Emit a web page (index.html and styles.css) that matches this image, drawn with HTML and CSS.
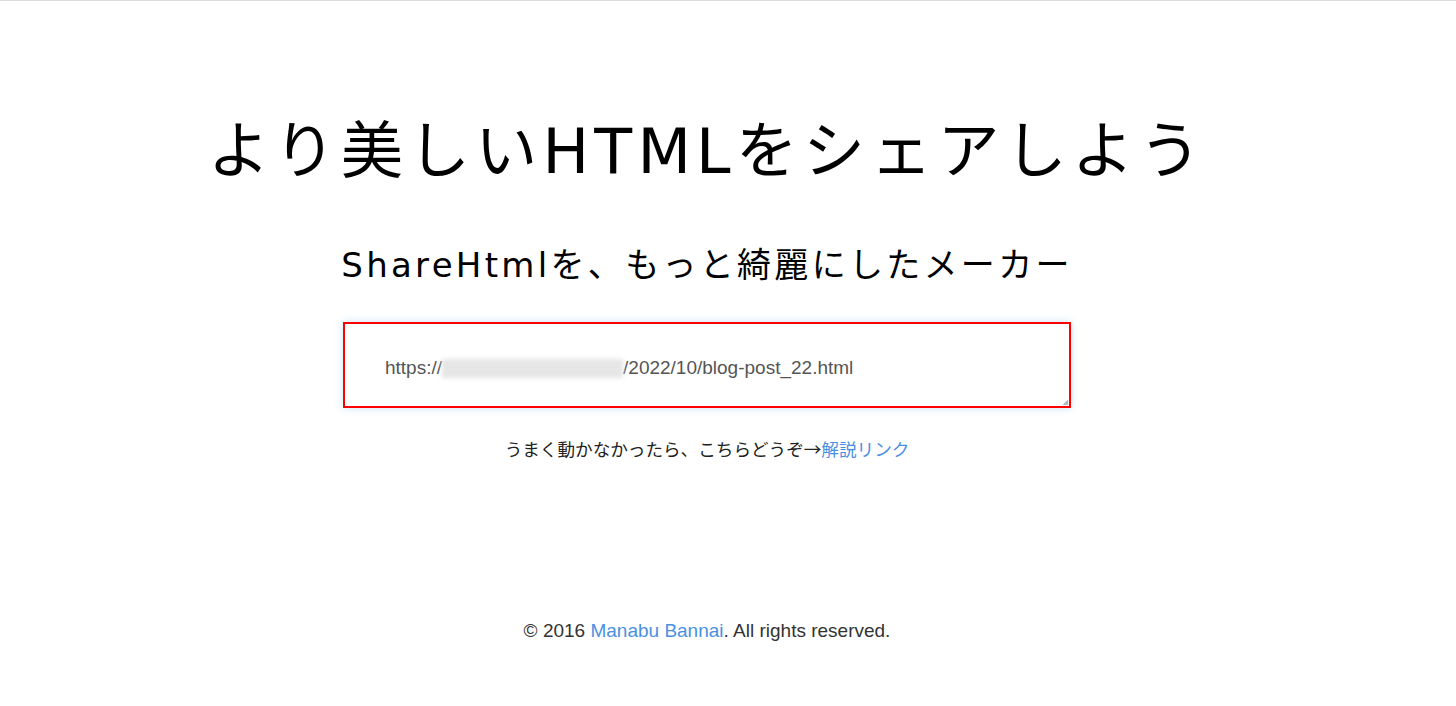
FILE: index.html
```html
<!DOCTYPE html>
<html lang="ja">
<head>
    <meta charset="UTF-8">
    <meta name="viewport" content="width=device-width, initial-scale=1.0">
    <title>ShareHtml Maker</title>
    <link rel="stylesheet" href="styles.css">
</head>
<body>

<div class="wrapper">
    <h1>より美しいHTMLをシェアしよう</h1>
    <h2>ShareHtmlを、もっと綺麗にしたメーカー</h2>

    <div class="url-box">
        <span>https://</span><span class="blur"></span><span>/2022/10/blog-post_22.html</span>
        <span class="grip"></span>
    </div>

    <p class="hint">うまく動かなかったら、こちらどうぞ→<a href="#">解説リンク</a></p>

    <footer class="footer">
        © 2016 <a href="#">Manabu Bannai</a>. All rights reserved.
    </footer>
</div>

</body>
</html>
```

FILE: styles.css
```css
* {
    box-sizing: border-box;
    margin: 0;
    padding: 0;
}

body {
    background: #fff;
    color: #000;
    border-top: 1px solid #dcdcdc;
    font-family: "DejaVu Sans", "Noto Sans CJK JP", sans-serif;
}

a {
    color: #4a90e2;
    text-decoration: none;
}

.wrapper {
    display: flex;
    flex-direction: column;
    align-items: center;
    margin-right: 42px;
    text-align: center;
}

h1 {
    font-size: 62px;
    font-weight: normal;
    letter-spacing: 5.2px;
    line-height: 1.2;
    margin-top: 114px;
}

h2 {
    font-size: 34px;
    font-weight: normal;
    letter-spacing: 3.3px;
    line-height: 1.2;
    margin-top: 56px;
}

.url-box {
    position: relative;
    display: flex;
    align-items: center;
    width: 728px;
    height: 86px;
    margin-top: 36px;
    padding: 6px 0 0 40px;
    border: 2px solid #ff0000;
    box-shadow: 0 0 8px rgba(102, 175, 233, 0.35);
    font-family: "Liberation Sans", Arial, sans-serif;
    font-size: 19px;
    color: #555;
    text-align: left;
}

.blur {
    display: inline-block;
    width: 181px;
    height: 19px;
    background: #e6e6e6;
    filter: blur(2px);
}

.grip {
    position: absolute;
    right: 1px;
    bottom: 1px;
    width: 5px;
    height: 5px;
    background: linear-gradient(135deg, transparent 50%, #b0b8c0 50%);
}

.hint {
    margin-top: 28px;
    font-size: 17.6px;
    color: #222;
    font-family: "Noto Sans CJK JP", sans-serif;
}

.footer {
    margin-top: 159px;
    font-family: "Liberation Sans", Arial, sans-serif;
    font-size: 19px;
    color: #333;
}
```
